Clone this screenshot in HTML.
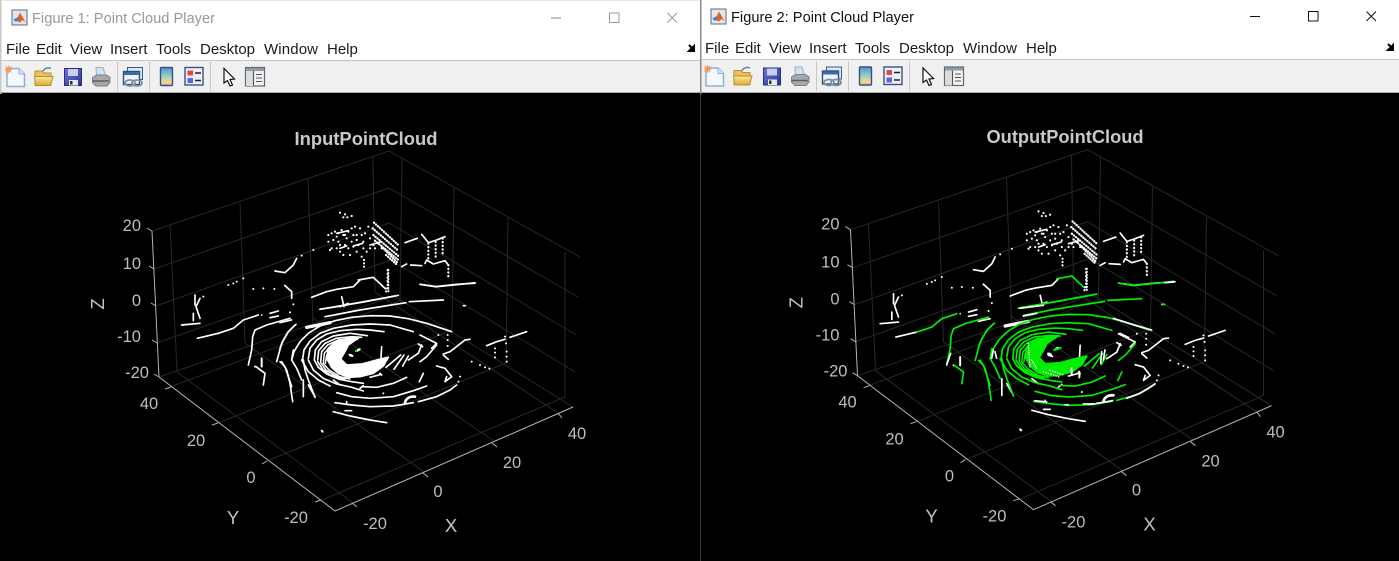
<!DOCTYPE html>
<html><head><meta charset="utf-8"><style>
html,body{margin:0;padding:0;background:#000;width:1399px;height:561px;overflow:hidden}
svg{display:block;position:absolute;left:0;top:0}
text{font-family:"Liberation Sans",sans-serif}
.c path{fill:none;stroke-linecap:round;stroke-linejoin:round}
</style></head><body>
<svg width="1399" height="561" viewBox="0 0 1399 561" xmlns="http://www.w3.org/2000/svg">
<defs>
<linearGradient id="cb" x1="0" y1="0" x2="0" y2="1"><stop offset="0" stop-color="#5a8fd8"/><stop offset=".45" stop-color="#8fd0c0"/><stop offset=".8" stop-color="#f0d890"/><stop offset="1" stop-color="#f3b080"/></linearGradient>
<linearGradient id="fo" x1="0" y1="0" x2="0" y2="1"><stop offset="0" stop-color="#fbe79a"/><stop offset="1" stop-color="#e0a830"/></linearGradient>
<linearGradient id="sv" x1="0" y1="0" x2="1" y2="1"><stop offset="0" stop-color="#6d78d8"/><stop offset="1" stop-color="#2a3290"/></linearGradient>

<g id="logo">
<rect x="0" y="0" width="15" height="15" fill="#dfe6ef" stroke="#5a6a80"/>
<path d="M1.500 9.500L5.500 7.500L8 2.500L13.500 12L10.500 10L8 12.500Z" fill="#e8601c"/>
<path d="M1.500 9.500L5.500 7.500L7 9L4 12Z" fill="#3a7fc8"/>
</g>

<g id="tools">
<path d="M7 68.500H19L24.500 74V86.500H7Z" fill="#f4f9ff" stroke="#8fb0d8" stroke-width="1.500"/>
<path d="M19 68.500V74H24.500" fill="#d8e8f8" stroke="#8fb0d8"/>
<circle cx="8.500" cy="69.500" r="2.500" fill="#f0904a"/>
<path d="M8.500 65.500v8M4.500 69.500h8M5.500 66.500l6 6M11.500 66.500l-6 6" stroke="#ee9a60" stroke-width="1"/>
<path d="M35 71H42L44 73H51V85H35Z" fill="#e8c060" stroke="#b89030"/>
<path d="M34.500 76.500H53L50.500 85.500H35.500Z" fill="url(#fo)" stroke="#b89030"/>
<path d="M43 71c2-3 5-3.500 8-2.500" fill="none" stroke="#6a88b0" stroke-width="1.600"/>
<rect x="64.500" y="68.500" width="17" height="17" fill="url(#sv)" stroke="#2a3080"/>
<rect x="68" y="69" width="10" height="7" fill="#c8cfee"/>
<rect x="69" y="80" width="9" height="5.500" fill="#e9e9ee"/><rect x="70" y="81" width="2.500" height="3.500" fill="#333"/>
<path d="M96 67.500h7l2.500 8h-9Z" fill="#cfe2f2" stroke="#9ab0c6"/>
<path d="M92.500 77.500l4-2.500h10l3.500 2.500v5l-3 3.500H96l-3.500-3.500Z" fill="#a8a8a8" stroke="#808080"/>
<path d="M93 81h16" stroke="#606060" stroke-width="1.500"/>
<path d="M117.500 62v29M149.500 62v29M210.500 62v29" stroke="#c8c8c8"/>
<rect x="127.500" y="67.500" width="15" height="12" fill="#dce8f6" stroke="#3a5a88"/>
<rect x="123.500" y="71.500" width="16" height="13" fill="#eef4fb" stroke="#2e4f80" stroke-width="1.400"/>
<rect x="124" y="72" width="15" height="3" fill="#3f6aa8"/>
<ellipse cx="130" cy="83" rx="5" ry="3" fill="none" stroke="#8090a0" stroke-width="1.800"/>
<ellipse cx="137" cy="83" rx="5" ry="3" fill="none" stroke="#8090a0" stroke-width="1.800"/>
<rect x="160.500" y="67.500" width="12" height="18" rx="1" fill="url(#cb)" stroke="#34508a" stroke-width="1.400"/>
<rect x="185" y="67.500" width="18" height="17.500" fill="#eef0f6" stroke="#3c5088" stroke-width="1.400"/>
<rect x="187.500" y="70.500" width="5.500" height="5" fill="#e04848"/><rect x="187.500" y="78" width="5.500" height="5" fill="#6060e0"/>
<path d="M195 73h6M195 80.500h6" stroke="#222" stroke-width="1.500"/>
<path d="M224 68.500V83L227.500 80.500L230 86L232.500 85L230 79.500L234.500 79Z" fill="#fff" stroke="#111" stroke-width="1.200"/>
<rect x="245.500" y="67.500" width="19" height="18.500" fill="#f2f2f2" stroke="#666" stroke-width="1.200"/>
<rect x="246" y="68" width="18" height="3" fill="#8b9bb0"/>
<rect x="246" y="71" width="7" height="15" fill="#dcdcdc"/>
<path d="M253.500 71v15M256 74.500h6M256 78h6M256 81.500h6" stroke="#555" stroke-width="1.100"/>
</g>

<g id="axes">
<g fill="none" stroke="#282828" stroke-width="1">
<path d="M152 231L389 151L580 257M154 269L389 188L578 297M156 306L389 223L576 335M157 343L391 260L575 372M159 377L394 296L573 407"/>
<path d="M170 225L177 372M240 203L245 343M308 179L313 325M373 157L375 292M402 158L400 300M454 188L452 330M508 218L506 363M565 252L565 397"/>
<path d="M353 503L177 372M424 472L245 343M494 441L313 318M558 413L375 292M320 501L565 397M267 461L506 363M218 423L452 330M170 387L402 300"/>
</g>
<g fill="none" stroke="#b4b4b4" stroke-width="1">
<path d="M152 231L159 377M147 228L152 231M149 266L154 269M151 303L156 306M152 340L157 343M154 374L159 377"/>
<path d="M159 377L335 511L573 407"/>
<path d="M352 503L357 507M423 473L428 477M492 443L497 447M558 413L562 418"/>
<path d="M315 502L321 500M262 464L267 461M212 425L218 423M165 389L171 387"/>
</g>
<g fill="#bdbdbd" font-size="16.500">
<g text-anchor="end">
<text x="141" y="231">20</text><text x="141" y="269">10</text><text x="141" y="306">0</text><text x="141" y="342">-10</text><text x="149" y="378">-20</text>
</g>
<g text-anchor="middle">
<text x="149" y="409">40</text><text x="196" y="446">20</text><text x="251" y="483">0</text><text x="296" y="523">-20</text>
<text x="375" y="529">-20</text><text x="438" y="497">0</text><text x="512" y="468">20</text><text x="577" y="439">40</text>
</g>
</g>
<g fill="#c4c4c4" font-size="18.500" text-anchor="middle">
<text x="233" y="524">Y</text><text x="451" y="532">X</text>
<text transform="translate(104 304) rotate(-90)">Z</text>
</g>
</g>

<g id="rings" class="c" stroke="currentColor">
<g transform="translate(280 280) scale(.33333)" stroke-width="5">
<path d="M165 368L215 375L270 380L340 378L400 368M415 365L470 350L510 330L530 315"/>
<path d="M170 338L215 350L270 355L340 350L400 332L440 318"/>
<path d="M245 320L290 322L340 310L380 292"/>
<path d="M35 240L42 215L60 185L85 160L120 138L165 122L215 112L270 107L330 108L385 116L440 130L515 155"/>
<path d="M68 237L72 210L90 183L120 160L160 145L215 135L270 132L330 135L400 155"/>
<path d="M85 235L90 205L110 180L140 162L180 152L230 148L270 150L312 155"/>
<path d="M103 240L106 210L125 185L160 168L210 160L262 167"/>
<path d="M113 240L116 212L135 190L168 175L215 170L245 172"/>
<path d="M122 245L125 215L143 195L175 180L235 175"/>
<path d="M130 248L133 220L150 200L185 184L232 178" stroke-width="4.500"/>
<path d="M136 250L140 225L157 205L190 188" stroke-width="4.500"/>
<path d="M103 240L115 262L140 282L175 297L215 305L250 310"/>
<path d="M85 240L100 270L130 295L170 312L215 322L250 333"/>
<path d="M65 240L85 275L115 300L150 318"/>
<path d="M113 245L128 268L150 285L195 298"/>
<path d="M122 248L138 270L165 287L210 297" stroke-width="4.500"/>
<path d="M130 250L147 270L175 287" stroke-width="4.500"/>
<path d="M45 135L25 155L10 180L0 205M5 245L20 270L30 310L38 365M70 240L75 270L85 300L105 352"/>
<path d="M40 210L35 240L50 265L65 300"/>
<path d="M120 88L190 76L250 66L355 46M135 110L240 90L378 68M388 65L490 60"/>
<path d="M420 13L470 20L530 14L585 8"/>
<path d="M318 262L362 225M342 268L372 225M368 258L385 228"/>
<path d="M430 280L418 305M420 245L440 230L470 195"/>
<path d="M140 235L145 205L165 187L200 176L238 172L205 195L195 215L182 237L200 255L245 252L290 240L325 232L310 258L280 280L240 290L205 292L175 280L155 262Z" fill="currentColor" style="fill:currentColor"/>
</g>
<g transform="translate(120 190) scale(.33333)" stroke-width="5">
<path d="M295 430L340 415L370 390L415 375"/>
<path d="M385 525L395 480L398 440L405 420L440 405L510 385"/>
<path d="M528 403L505 425L485 460L470 515M480 515L495 530L505 560L515 590M408 530L435 550L430 585"/>
<path d="M715 270L760 262L795 295M650 350L825 318"/>
</g>
</g>

<g id="white" class="c" stroke="#fff">
<g transform="translate(280 280) scale(.33333)" stroke-width="5">
<path d="M160 395L210 408L270 420L320 428"/>
<path d="M0 128L35 120"/>
<path d="M80 142L150 128" stroke-width="10"/>
<path d="M305 200L303 235"/>
<path d="M425 195L415 220L385 240M415 192L428 200"/>
<path d="M490 222L510 215L555 180L570 178M490 225L505 238"/>
<path d="M420 165L470 190L455 205"/>
<path d="M470 258L495 265L515 290L495 305L500 290"/>
<path d="M375 368C378 355 390 348 405 350" stroke-width="8"/>
<path d="M620 197L650 185L675 178M690 172L740 155"/>
<path d="M70 300V350M85 315L105 350M195 392L215 392M200 365v5M160 300l20 15M240 325l10-8M270 292l30-8M300 280l5 5M550 77h6"/>
<path d="M475 165h.1M503 165h.1M503 180h.1M503 198h.1M540 290h.1M535 305h.1M575 245h.1M600 255h.1M615 262h.1M628 266h.1M645 205h.1M645 218h.1M645 232h.1M675 170h.1M678 190h.1M680 215h.1M680 230h.1M680 245h.1M125 452l3 3M310 340h.1" stroke-width="6"/>
<ellipse cx="213" cy="226" rx="8" ry="4" fill="#fff" stroke="none" transform="rotate(20 213 226)"/>
<ellipse cx="235" cy="210" rx="8" ry="4" fill="#fff" stroke="none" transform="rotate(-30 235 210)"/>
</g>
<g transform="translate(120 190) scale(.33333)" stroke-width="5">
<path d="M232 445L295 430"/>
<path d="M425 375h.1M450 370L475 363M450 383L475 378M465 243L495 248L520 225L530 205M185 405L240 400M225 315V345M240 325L228 350L240 385M220 370V392"/>
<path d="M325 285h.1M340 280h.1M350 275h.1M370 265h.1M400 297h.1M430 295h.1M463 297h.1M545 197h.1M580 180h.1M495 287h.1M520 343h.1M510 367h.1M250 320h.1M425 505V530M405 530h.1" stroke-width="6"/>
<path d="M495 287L515 305L515 325"/>
<path d="M575 322L620 305L650 298L700 290L720 270"/>
<path d="M600 358L680 345M665 320L672 350M660 350L685 340"/>
<path d="M805 240V310M798 295V308" stroke-dasharray="1 8" stroke-width="6"/>
</g>
<g transform="translate(140 120) scale(.33333)" stroke-width="6.500">
<path d="M600 278h.1M615 283h.1M610 292h.1M622 292h.1M635 288h.1M565 345h.1M575 340h.1M585 335h.1M595 340h.1M605 330h.1M615 345h.1M625 335h.1M635 325h.1M645 320h.1M660 325h.1M685 320h.1M590 350h.1M610 345h.1M620 355h.1M640 345h.1M665 345h.1M650 360h.1M670 365h.1M690 355h.1M565 365h.1M575 385h.1M590 385h.1M600 395h.1M610 405h.1M625 385h.1M640 380h.1M655 375h.1M670 385h.1M680 395h.1M700 375h.1M715 370h.1M725 385h.1M570 390h.1M600 375h.1M630 405h.1M650 395h.1M665 410h.1M672 420h.1M672 430h.1M672 440h.1M690 385h.1M705 385h.1M580 360h.1M595 365h.1M615 375h.1M635 365h.1M650 345h.1M675 340h.1"/>
<path d="M590 340L625 332M600 385L620 378M640 378L668 370M690 375L725 365" stroke-width="5"/>
<path d="M702 308L775 375M698 325L775 392M700 345L775 408M705 362L775 420M725 380L772 428M738 405L768 432" stroke-dasharray="1 7"/>
<path d="M795 368L832 355M845 343L865 368L890 360L915 350" stroke-width="5"/>
<path d="M865 370V415M887 365V410M908 355V410M743 450V510M925 435V470" stroke-dasharray="1 10"/>
<path d="M785 440L800 432M812 435L845 437M855 430L860 420L880 432L915 422L925 435" stroke-width="5"/>
<path d="M840 493L885 500L950 493L1005 490" stroke-width="5"/>
</g>
</g>
</defs>

<rect width="1399" height="561" fill="#000"/>

<!-- FIGURE 1 -->
<rect x="0" y="0" width="700" height="60" fill="#fff"/>
<rect x="0" y="0" width="700" height="1" fill="#e8e8e8"/>
<rect x="0" y="0" width="1.500" height="94" fill="#c8c8c8"/>
<rect x="1.500" y="60" width="699" height="33" fill="#f0f0f0"/>
<path d="M0 60.500H700" stroke="#c4c4c4"/>
<path d="M0 92.500H700" stroke="#a8a8a8"/>
<use href="#logo" transform="translate(12 10)"/>
<text x="32" y="23" font-size="15" fill="#999" textLength="183" lengthAdjust="spacingAndGlyphs">Figure 1: Point Cloud Player</text>
<path d="M551 18H561" stroke="#888"/>
<rect x="609.500" y="13" width="9.500" height="9.500" fill="none" stroke="#999"/>
<path d="M667.500 13L677 22.500M677 13L667.500 22.500" stroke="#999"/>
<g font-size="15" fill="#1a1a1a">
<text x="6" y="54">File</text><text x="36" y="54">Edit</text><text x="70" y="54">View</text><text x="110" y="54">Insert</text><text x="156" y="54">Tools</text><text x="200" y="54">Desktop</text><text x="264" y="54" textLength="54">Window</text><text x="327" y="54">Help</text>
</g>
<path d="M689 45L694 50M694 46V51H689Z" stroke="#000" stroke-width="2" fill="#000"/>
<use href="#tools"/>
<rect x="700" y="0" width="1" height="561" fill="#3a3a3a"/>
<use href="#axes"/>
<text x="366" y="145" font-size="18" font-weight="bold" fill="#c9c9c9" text-anchor="middle" textLength="143" lengthAdjust="spacingAndGlyphs">InputPointCloud</text>
<use href="#rings" style="color:#fff"/>
<use href="#white"/>
<rect x="355" y="350" width="2" height="2" fill="#0f0"/>

<!-- FIGURE 2 -->
<rect x="700.500" y="0" width="699" height="60" fill="#fff"/>
<rect x="701" y="60" width="698" height="33" fill="#f0f0f0"/>
<rect x="700" y="0" width="1.500" height="94" fill="#8a8a8a"/>
<path d="M701 59.500H1399" stroke="#c4c4c4"/>
<path d="M701 92.500H1399" stroke="#a8a8a8"/>
<use href="#logo" transform="translate(711 9)"/>
<text x="731" y="22" font-size="15" fill="#111" textLength="183" lengthAdjust="spacingAndGlyphs">Figure 2: Point Cloud Player</text>
<path d="M1250 16.500H1260" stroke="#111"/>
<rect x="1308.500" y="11.500" width="9.500" height="9.500" fill="none" stroke="#111"/>
<path d="M1366.500 11.500L1376 21M1376 11.500L1366.500 21" stroke="#111"/>
<g font-size="15" fill="#1a1a1a">
<text x="705" y="53">File</text><text x="735" y="53">Edit</text><text x="769" y="53">View</text><text x="809" y="53">Insert</text><text x="855" y="53">Tools</text><text x="899" y="53">Desktop</text><text x="963" y="53" textLength="54">Window</text><text x="1026" y="53">Help</text>
</g>
<path d="M1388 44L1393 49M1393 45V50H1388Z" stroke="#000" stroke-width="2" fill="#000"/>
<use href="#tools" transform="translate(699 -.5)"/>
<g transform="translate(698.500 -1.300)">
<use href="#axes"/>
<use href="#white"/>
<use href="#rings" style="color:#00ee00"/>
</g>
<g class="c" stroke="#fff" stroke-width="5" transform="translate(980 280) scale(.33333)">
<path d="M400 115L440 128L515 150M420 160L445 172M120 85L190 76M130 108L170 100"/>
<path d="M165 362L200 366M255 374L265 374M310 372L345 372M350 370L398 362M440 355L480 340L525 312"/>
<path d="M40 210L35 235M45 215L50 235M555 8L585 5"/>
<path d="M365 215L362 250M375 210L370 240"/>
<path d="M275 265V282M298 275V292" stroke-width="6"/>
<path d="M145 190L150 262M155 240L170 265" stroke-width="4" stroke-dasharray="1 6"/>
<path d="M190 275L240 292M210 270L250 285" stroke-width="4" stroke-dasharray="1 7"/>
<path d="M205 225l12 4" stroke-width="6"/>
</g>
<g class="c" stroke="#fff" stroke-width="5" transform="translate(820 190) scale(.33333)">
<path d="M380 525L392 490"/>
</g>
<g class="c" stroke="#00ee00" stroke-width="6" transform="translate(980 280) scale(.33333)">
<path d="M222 210L242 204"/>
<path d="M548 73h6"/>
</g>
<rect x="700" y="94" width="1" height="467" fill="#3a3a3a"/>
<text x="1065" y="143" font-size="18" font-weight="bold" fill="#c9c9c9" text-anchor="middle" textLength="157" lengthAdjust="spacingAndGlyphs">OutputPointCloud</text>
</svg>
</body></html>
